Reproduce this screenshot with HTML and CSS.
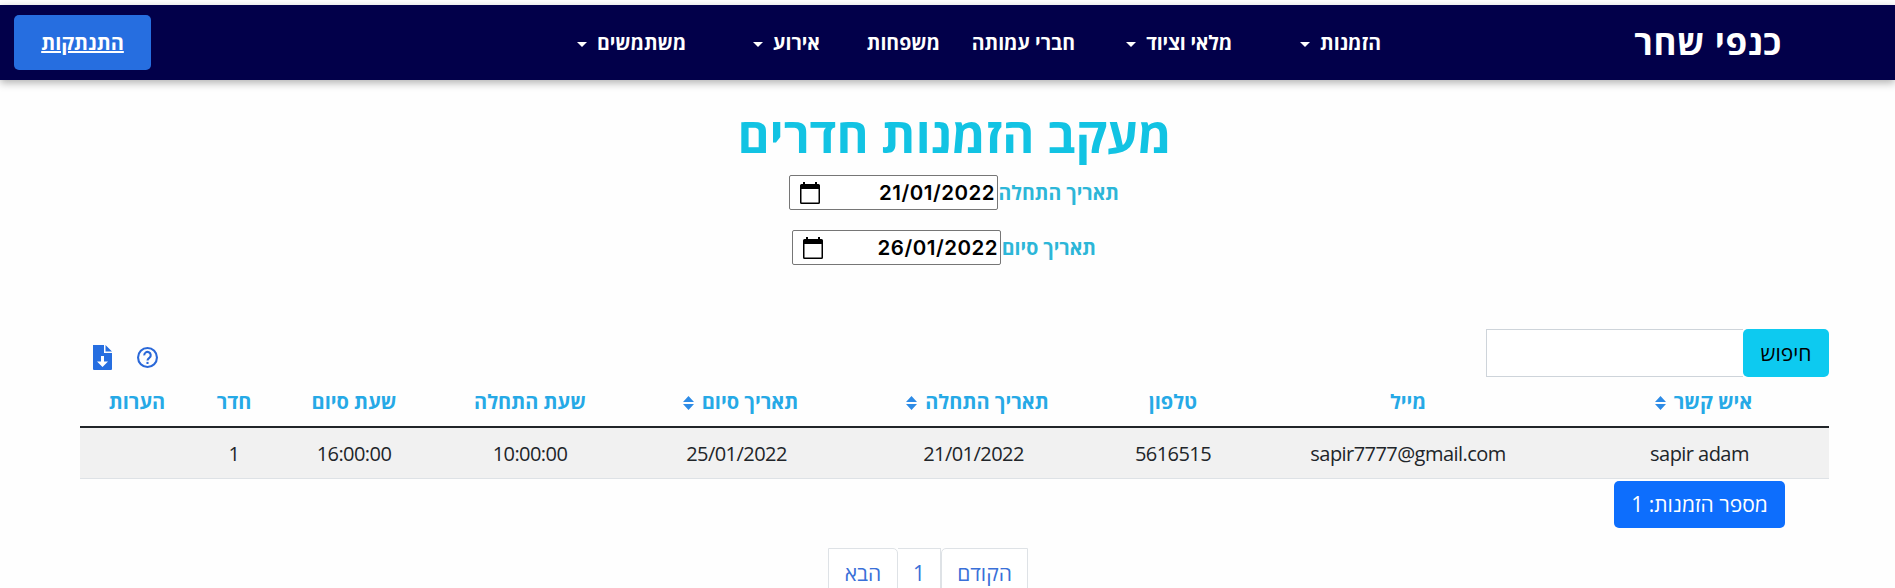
FILE: index.html
```html
<!DOCTYPE html>
<html lang="he" dir="rtl">
<head>
<meta charset="utf-8">
<title>מעקב הזמנות חדרים</title>
<link rel="stylesheet" href="styles.css">
</head>
<body>
<header class="navbar">
  <a class="brand">כנפי שחר</a>
  <nav class="menu">
    <a class="item orders">הזמנות<i class="caret"></i></a>
    <a class="item stock">מלאי וציוד<i class="caret"></i></a>
    <a class="item members">חברי עמותה</a>
    <a class="item families">משפחות</a>
    <a class="item event">אירוע<i class="caret"></i></a>
    <a class="item users">משתמשים<i class="caret"></i></a>
  </nav>
  <a class="logout">התנתקות</a>
</header>
<main>
  <h1 class="title">מעקב הזמנות חדרים</h1>
  <div class="date-row start">
    <span class="date-label">תאריך התחלה</span>
    <div class="date-input"><span>21/01/2022</span>
      <svg class="cal" viewBox="0 0 20 22"><path d="M3 0h2v2h10V0h2v2h1.500a1.500 1.500 0 0 1 1.500 1.500v17a1.500 1.500 0 0 1-1.500 1.500h-17A1.500 1.500 0 0 1 0 20.500v-17A1.500 1.500 0 0 1 1.500 2H3zM1.500 7v13.500h17V7z" fill="#000" fill-rule="evenodd"/></svg>
    </div>
  </div>
  <div class="date-row end">
    <span class="date-label">תאריך סיום</span>
    <div class="date-input"><span>26/01/2022</span>
      <svg class="cal" viewBox="0 0 20 22"><path d="M3 0h2v2h10V0h2v2h1.500a1.500 1.500 0 0 1 1.500 1.500v17a1.500 1.500 0 0 1-1.500 1.500h-17A1.500 1.500 0 0 1 0 20.500v-17A1.500 1.500 0 0 1 1.500 2H3zM1.500 7v13.500h17V7z" fill="#000" fill-rule="evenodd"/></svg>
    </div>
  </div>
  <section class="content">
    <div class="toolbar">
      <div class="search"><button class="search-btn">חיפוש</button><div class="search-input"></div></div>
      <div class="tools">
        <svg class="help" viewBox="0 0 24 24"><circle cx="12" cy="12" r="10.800" fill="none" stroke="#2a68d8" stroke-width="2.400"/><path d="M8.300 9.600a3.700 3.700 0 1 1 5.900 2.700c-1.400 1-2.200 1.500-2.200 3.200" fill="none" stroke="#2a68d8" stroke-width="2.400"/><path d="M10.800 17h2.400v2.400h-2.400z" fill="#2a68d8"/></svg>
        <svg class="file" viewBox="0 0 19 25"><path d="M0 0h11v8h8v16a1 1 0 0 1-1 1H1a1 1 0 0 1-1-1zM12.500 0 19 6.500h-6.500zM8 11v5.500H4L9.500 22l5.500-5.500h-4V11z" fill="#266ee0" fill-rule="evenodd"/></svg>
      </div>
    </div>
    <table class="orders-table">
      <colgroup><col class="c1"><col class="c2"><col class="c3"><col class="c4"><col class="c5"><col class="c6"><col class="c7"><col class="c8"><col class="c9"></colgroup>
      <thead><tr>
        <th class="sortable">איש קשר<svg class="sort" viewBox="0 0 11 14"><path d="M5.500 0 11 6H0zM0 8h11l-5.500 6z"/></svg></th>
        <th>מייל</th>
        <th>טלפון</th>
        <th class="sortable">תאריך התחלה<svg class="sort" viewBox="0 0 11 14"><path d="M5.500 0 11 6H0zM0 8h11l-5.500 6z"/></svg></th>
        <th class="sortable">תאריך סיום<svg class="sort" viewBox="0 0 11 14"><path d="M5.500 0 11 6H0zM0 8h11l-5.500 6z"/></svg></th>
        <th>שעת התחלה</th>
        <th>שעת סיום</th>
        <th>חדר</th>
        <th>הערות</th>
      </tr></thead>
      <tbody><tr>
        <td>sapir adam</td><td>sapir7777@gmail.com</td><td>5616515</td><td>21/01/2022</td><td>25/01/2022</td><td>10:00:00</td><td>16:00:00</td><td>1</td><td></td>
      </tr></tbody>
    </table>
    <button class="count">מספר הזמנות: 1</button>
  </section>
  <div class="pagination"><a class="prev">הקודם</a><a class="num">1</a><a class="next">הבא</a></div>
</main>
</body>
</html>
```
FILE: styles.css
```css
* { box-sizing: border-box; }
body {
  margin: 0;
  height: 588px;
  overflow: hidden;
  padding-top: 5px;
  background: #fefefe;
  color: #212529;
  font-family: "Open Sans", "Noto Sans", sans-serif;
  font-size: 19px;
}
.navbar {
  display: flex;
  align-items: center;
  height: 75px;
  padding: 0 113px 0 14px;
  background: #02004a;
  color: #fff;
  font-weight: 700;
  box-shadow: 0 3px 8px rgba(0, 0, 0, .3);
}
.brand { width: 148px; font-size: 35px; letter-spacing: .6px; line-height: 1; white-space: nowrap; padding-bottom: 2px; }
.menu { display: flex; margin-right: 253px; }
.item { display: flex; align-items: center; gap: 10px; white-space: nowrap; font-size: 19.5px; }
.caret { border: 5px solid transparent; border-top-color: #fff; border-bottom: 0; margin-top: 3px; }
.orders { width: 149px; }
.stock { width: 157px; letter-spacing: -.2px; }
.members { width: 135px; }
.families { width: 120px; }
.event { width: 134px; }
.users { width: 107px; letter-spacing: -.1px; }
.logout {
  margin-right: auto;
  width: 137px;
  height: 55px;
  line-height: 56px;
  border-radius: 5px;
  background: #266ee0;
  text-align: center;
  text-decoration: underline;
  text-decoration-thickness: 2px;
  font-size: 20px;
}
.title {
  margin: 23px 0 0;
  height: 72px;
  line-height: 62px;
  padding-left: 14px;
  text-align: center;
  font-size: 49px;
  font-weight: 700;
  color: #12c3e3;
  white-space: nowrap;
}
.date-row { display: flex; height: 35px; align-items: center; }
.start { padding-right: 776px; }
.end { padding-right: 799px; margin-top: 20px; }
.date-label { color: #2cb6d8; font-weight: 700; white-space: nowrap; font-size: 19.500px; }
.start .date-label { width: 121px; }
.end .date-label { width: 95px; }
.date-input {
  display: flex;
  align-items: center;
  justify-content: space-between;
  width: 209px;
  height: 35px;
  padding: 0 2px 0 10px;
  border: 1px solid #767676;
  border-radius: 2px;
  background: #fff;
  color: #000;
  font: 600 20.500px Inter, sans-serif;
  letter-spacing: .5px;
}
.cal { width: 20px; height: 22px; }
.content { margin: 64px 66px 0 80px; }
.toolbar { display: flex; justify-content: space-between; height: 48px; }
.search { display: flex; }
.search-btn {
  width: 86px;
  border: 0;
  border-radius: 5px;
  background: #0dcaf0;
  color: #000;
  font: 21px "Open Sans", sans-serif;
}
.search-input { width: 257px; border: 1px solid #ced4da; border-right: 0; background: #fff; }
.tools { display: flex; align-items: center; gap: 25px; padding: 11px 0 0 13px; }
.help { width: 21px; height: 21px; margin-top: -2px; }
.file { width: 19px; height: 25px; margin-top: -2px; }
.orders-table { width: 1749px; table-layout: fixed; border-collapse: collapse; text-align: center; }
.c1 { width: 259px; }
.c2 { width: 324px; }
.c3 { width: 146px; }
.c4 { width: 253px; }
.c5 { width: 221px; }
.c6 { width: 192px; }
.c7 { width: 160px; }
.c8 { width: 80px; }
.c9 { width: 114px; }
.orders-table th { height: 50px; padding: 0; color: #26a9e6; font-weight: 700; font-size: 20px; white-space: nowrap; border-bottom: 2px solid #212529; }
.orders-table th.sortable { padding-left: 8px; }
.orders-table td { height: 51px; padding: 2px 0 0; font-size: 20px; letter-spacing: -.55px; background: #f1f1f1; border-bottom: 1px solid #dee2e6; }
.sort { width: 11px; height: 14px; margin-right: 8px; fill: #2d8be6; vertical-align: -1px; }
.count {
  display: block;
  width: 171px;
  height: 47px;
  margin: 2px 44px 0 0;
  border: 0;
  border-radius: 5px;
  background: #0d6efd;
  color: #fff;
  font: 21px "Open Sans", sans-serif;
}
.pagination { display: flex; margin: 20px 867px 0 0; height: 48px; line-height: 48px; color: #3a70d8; text-align: center; font-size: 21px; }
.pagination a { border: 1px solid #dee2e6; background: #fff; }
.prev { width: 87px; border-top-left-radius: 5px; }
.num { width: 43px; border-left: 0 !important; }
.next { width: 70px; border-top-right-radius: 5px; }
```
